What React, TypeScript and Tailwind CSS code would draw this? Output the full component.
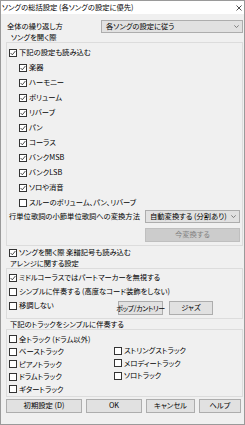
import React from 'react';

const font = "[font-family:'Noto_Sans_CJK_JP','Noto_Sans',sans-serif] [font-feature-settings:'palt']";

const Box = ({ checked }: { checked: boolean }) => (
  <span className="w-[8px] h-[8px] border border-[#333] bg-white flex items-center justify-center shrink-0">
    {checked && (
      <svg width="6" height="6" viewBox="0 0 6 6">
        <polyline points="0.6,3 2.3,4.8 5.4,1" fill="none" stroke="#333" strokeWidth="0.9" />
      </svg>
    )}
  </span>
);

const CheckRow = ({ checked, label, className = '' }: { checked: boolean; label: string; className?: string }) => (
  <div className={`flex items-center gap-[2px] ${className}`}>
    <Box checked={checked} />
    <span className="whitespace-nowrap">{label}</span>
  </div>
);

const Chevron = () => (
  <svg width="5" height="3" viewBox="0 0 5 3">
    <polyline points="0.3,0.4 2.5,2.5 4.7,0.4" fill="none" stroke="#666" strokeWidth="0.8" />
  </svg>
);

const Dropdown = ({ text, className = '' }: { text: string; className?: string }) => (
  <div className={`flex items-center justify-between bg-[#e1e1e1] border border-[#adadad] pl-[4px] pr-[3px] ${className}`}>
    <span className="whitespace-nowrap">{text}</span>
    <Chevron />
  </div>
);

const Btn = ({ label, className = '' }: { label: string; className?: string }) => (
  <div className={`flex items-center justify-center bg-[#e1e1e1] border border-[#adadad] h-[14px] whitespace-nowrap ${className}`}>
    {label}
  </div>
);

const subItems = ['楽器', 'ハーモニー', 'ボリューム', 'リバーブ', 'パン', 'コーラス', 'バンクMSB', 'バンクLSB', 'ソロや消音'];

export default function App() {
  return (
    <div className={`w-[245px] h-[425px] bg-[#f0f0f0] border border-[#9a9a9a] text-[7.3px] leading-none text-black ${font}`}>
      {/* title bar */}
      <div className="h-[13px] bg-white flex items-center justify-between pl-[1px] pr-[2px]">
        <span className="whitespace-nowrap">ソングの総括設定 (各ソングの設定に優先)</span>
        <svg width="6" height="6" viewBox="0 0 6 6">
          <path d="M0.5 0.5 L5.5 5.5 M5.5 0.5 L0.5 5.5" stroke="#222" strokeWidth="0.8" />
        </svg>
      </div>

      <div className="pl-[5px] pr-[1px]">
        <div className="mt-[6px] h-[13px] flex items-center">
          <span className="pl-[1px]">全体の繰り返し方</span>
          <Dropdown text="各ソングの設定に従う" className="ml-auto w-[142px] h-[13px]" />
        </div>

        {/* group 1 */}
        <div className="h-[9px] leading-[9px] pl-[5px]">ソングを開く際</div>
        <div className="border border-[#dcdcdc] pt-[2px] pb-[3px] pl-[2px] pr-[2px]">
          <CheckRow checked label="下記の設定も読み込む" className="h-[15px]" />
          <div className="pl-[10px]">
            {subItems.map((s) => (
              <CheckRow key={s} checked label={s} className="h-[15px]" />
            ))}
            <CheckRow checked={false} label="スルーのボリューム、パン、リバーブ" className="h-[15px]" />
          </div>
          <div className="h-[13px] flex items-center">
            <span className="whitespace-nowrap">行単位歌詞の小節単位歌詞への変換方法</span>
            <Dropdown text="自動変換する (分割あり)" className="ml-auto w-[95px] h-[13px]" />
          </div>
          <div className="flex mt-[5px]">
            <div className="ml-auto w-[95px] h-[14px] bg-[#cccccc] border border-[#bfbfbf] text-[#838383] flex items-center justify-center">
              今変換する
            </div>
          </div>
        </div>

        <CheckRow checked label="ソングを開く際 楽譜記号も読み込む" className="h-[13px] pl-[3px]" />

        {/* group 2 */}
        <div className="h-[9px] leading-[9px] pl-[4px]">アレンジに関する設定</div>
        <div className="border border-[#dcdcdc] pt-[2px] pb-[3px] pl-[2px] pr-[2px]">
          <CheckRow checked label="ミドルコーラスではパートマーカーを無視する" className="h-[14px]" />
          <CheckRow checked={false} label="シンプルに伴奏する (高度なコード装飾をしない)" className="h-[14px]" />
          <div className="flex h-[16px]">
            <CheckRow checked={false} label="移調しない" className="h-[14px] w-[109px]" />
            <div className="flex gap-[6px] mt-[2px]">
              <Btn label="ポップ/カントリー" className="w-[45px] tracking-[-0.4px] text-[7px]" />
              <Btn label="ジャズ" className="w-[44px]" />
            </div>
          </div>
        </div>

        {/* group 3 */}
        <div className="h-[10px] leading-[10px] pl-[4px]">下記のトラックをシンプルに伴奏する</div>
        <div className="border border-[#dcdcdc] pt-[3px] pl-[2px] pr-[2px]">
          <CheckRow checked={false} label="全トラック (ドラム以外)" className="h-[12.5px]" />
          <div className="grid grid-cols-[105px_1fr]">
            <div>
              <CheckRow checked={false} label="ベーストラック" className="h-[12.5px]" />
              <CheckRow checked={false} label="ピアノトラック" className="h-[12.5px]" />
              <CheckRow checked={false} label="ドラムトラック" className="h-[12.5px]" />
              <CheckRow checked={false} label="ギタートラック" className="h-[12.5px]" />
            </div>
            <div className="-mt-[1px]">
              <CheckRow checked={false} label="ストリングストラック" className="h-[12.5px]" />
              <CheckRow checked={false} label="メロディートラック" className="h-[12.5px]" />
              <CheckRow checked={false} label="ソロトラック" className="h-[12.5px]" />
            </div>
          </div>
        </div>

        <div className="flex gap-[4px] mt-[2px]">
          <Btn label="初期設定 (D)" className="w-[76px]" />
          <Btn label="OK" className="w-[56px] border-[#0078d7]" />
          <Btn label="キャンセル" className="w-[49px]" />
          <Btn label="ヘルプ" className="w-[42px]" />
        </div>
      </div>
    </div>
  );
}
